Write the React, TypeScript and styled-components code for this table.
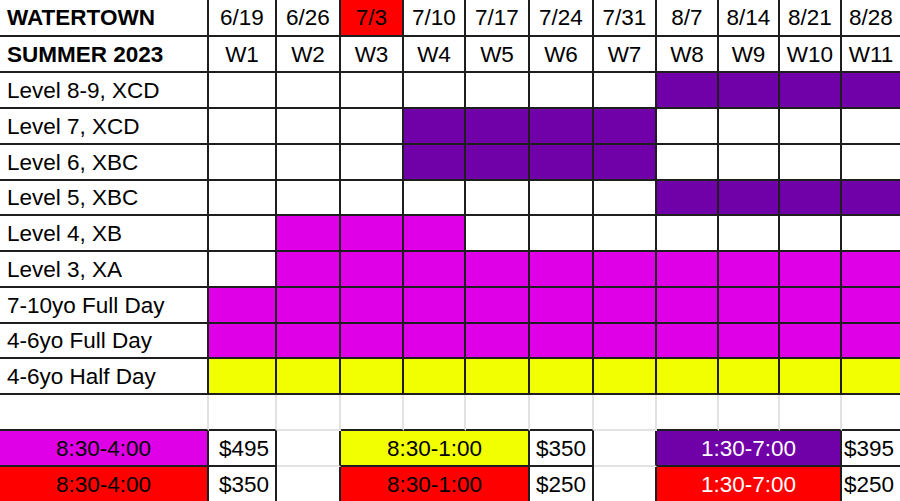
import React from 'react';
import styled, { createGlobalStyle } from 'styled-components';

const GlobalStyle = createGlobalStyle`
  html, body {
    margin: 0;
    padding: 0;
    background: #ffffff;
    overflow: hidden;
  }
`;

type Edge = 'dark' | 'light';
type Align = 'left' | 'center' | 'right';

const DARK = '#1e1e1e';
const LIGHT = '#e2e2e2';

const fills = {
  purple: '#7000a8',
  magenta: '#e000e8',
  yellow: '#f2ff00',
  red: '#ff0000',
  white: '#ffffff'
};

const weeks = [
  { date: '6/19', week: 'W1' },
  { date: '6/26', week: 'W2' },
  { date: '7/3', week: 'W3', holiday: true },
  { date: '7/10', week: 'W4' },
  { date: '7/17', week: 'W5' },
  { date: '7/24', week: 'W6' },
  { date: '7/31', week: 'W7' },
  { date: '8/7', week: 'W8' },
  { date: '8/14', week: 'W9' },
  { date: '8/21', week: 'W10' },
  { date: '8/28', week: 'W11' }
];

const programs = [
  { label: 'Level 8-9, XCD', fill: fills.purple, from: 8, to: 11 },
  { label: 'Level 7, XCD', fill: fills.purple, from: 4, to: 7 },
  { label: 'Level 6, XBC', fill: fills.purple, from: 4, to: 7 },
  { label: 'Level 5, XBC', fill: fills.purple, from: 8, to: 11 },
  { label: 'Level 4, XB', fill: fills.magenta, from: 2, to: 4 },
  { label: 'Level 3, XA', fill: fills.magenta, from: 2, to: 11 },
  { label: '7-10yo Full Day', fill: fills.magenta, from: 1, to: 11 },
  { label: '4-6yo Full Day', fill: fills.magenta, from: 1, to: 11 },
  { label: '4-6yo Half Day', fill: fills.yellow, from: 1, to: 11 }
];

type Price = { span: number; fill: string; text: string; align: Align; ink?: string } | null;

const priceRows: Price[][] = [
  [
    { span: 1, fill: fills.magenta, text: '8:30-4:00', align: 'center' },
    { span: 1, fill: fills.white, text: '$495', align: 'right' },
    null,
    { span: 3, fill: fills.yellow, text: '8:30-1:00', align: 'center' },
    { span: 1, fill: fills.white, text: '$350', align: 'right' },
    null,
    { span: 3, fill: fills.purple, text: '1:30-7:00', align: 'center', ink: '#ffffff' },
    { span: 1, fill: fills.white, text: '$395', align: 'right' }
  ],
  [
    { span: 1, fill: fills.red, text: '8:30-4:00', align: 'center' },
    { span: 1, fill: fills.white, text: '$350', align: 'right' },
    null,
    { span: 3, fill: fills.red, text: '8:30-1:00', align: 'center' },
    { span: 1, fill: fills.white, text: '$250', align: 'right' },
    null,
    { span: 3, fill: fills.red, text: '1:30-7:00', align: 'center', ink: '#ffffff' },
    { span: 1, fill: fills.white, text: '$250', align: 'right' }
  ]
];

const Sheet = styled.div`
  display: grid;
  grid-template-columns: 209px 68px 64px 63px 62px 64px 64px 63px 62px 61px 62px 60px;
  grid-template-rows: 37px 36px 36px 36px 36px 35px 36px 36px 36px 35px 36px 36px 36px 36px;
  width: 902px;
  font-family: 'Liberation Sans', Arial, sans-serif;
  font-size: 22.5px;
  color: #000000;
`;

const Cell = styled.div<{
  $fill?: string;
  $right?: Edge;
  $bottom?: Edge;
  $align?: Align;
  $bold?: boolean;
  $ink?: string;
  $span?: number;
}>`
  box-sizing: border-box;
  display: flex;
  align-items: center;
  justify-content: ${(p) =>
    p.$align === 'left' ? 'flex-start' : p.$align === 'right' ? 'flex-end' : 'center'};
  padding: ${(p) => (p.$align === 'left' ? '1px 0 0 7px' : p.$align === 'right' ? '1px 6px 0 0' : '1px 0 0')};
  grid-column: span ${(p) => p.$span ?? 1};
  background: ${(p) => p.$fill ?? '#ffffff'};
  color: ${(p) => p.$ink ?? '#000000'};
  font-weight: ${(p) => (p.$bold ? 700 : 400)};
  border-right: 2px solid ${(p) => (p.$right === 'light' ? LIGHT : DARK)};
  border-bottom: 2px solid ${(p) => (p.$bottom === 'light' ? LIGHT : DARK)};
  white-space: nowrap;
  overflow: hidden;
`;

// which columns of the first price row are bordered blocks
const groupCols: boolean[] = priceRows[0].flatMap((p) =>
  p ? Array(p.span).fill(true) : [false]
);

const App = () => {
  return (
    <>
      <GlobalStyle />
      <Sheet>
        <Cell $align="left" $bold>
          WATERTOWN
        </Cell>
        {weeks.map((w) => (
          <Cell key={w.date} $fill={w.holiday ? fills.red : undefined}>
            {w.date}
          </Cell>
        ))}

        <Cell $align="left" $bold>
          SUMMER 2023
        </Cell>
        {weeks.map((w) => (
          <Cell key={w.week}>{w.week}</Cell>
        ))}

        {programs.map((row) => (
          <React.Fragment key={row.label}>
            <Cell $align="left">{row.label}</Cell>
            {weeks.map((w, i) => (
              <Cell
                key={w.week}
                $fill={i + 1 >= row.from && i + 1 <= row.to ? row.fill : undefined}
              />
            ))}
          </React.Fragment>
        ))}

        {groupCols.map((isGroup, i) => (
          <Cell key={`blank-${i}`} $right="light" $bottom={isGroup ? 'dark' : 'light'} />
        ))}

        {priceRows.map((row, r) =>
          row.map((p, i) => {
            if (!p) {
              const next = row[i + 1];
              return (
                <Cell key={`p${r}-${i}`} $right={next ? 'dark' : 'light'} $bottom="light" />
              );
            }
            return (
              <Cell
                key={`p${r}-${i}`}
                $span={p.span}
                $fill={p.fill}
                $align={p.align}
                $ink={p.ink}
              >
                {p.text}
              </Cell>
            );
          })
        )}
      </Sheet>
    </>
  );
};

export default App;
